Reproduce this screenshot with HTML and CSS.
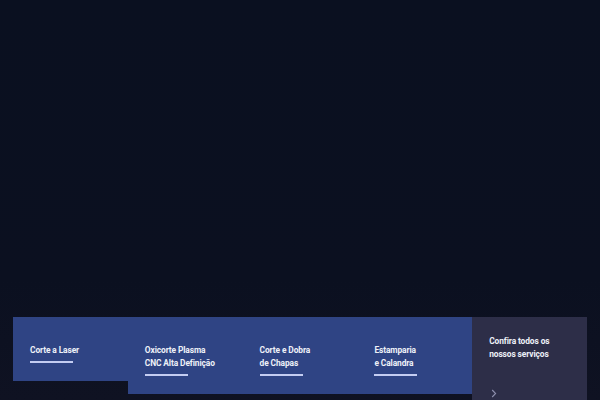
FILE: index.html
```html
<!DOCTYPE html>
<html lang="pt">
<head>
<meta charset="utf-8">
<link rel="stylesheet" href="styles.css">
</head>
<body>
<main class="hero"></main>
<section class="services">
  <a class="tile tile-short"><span class="label">Corte a Laser</span><span class="bar"></span></a>
  <a class="tile"><span class="label">Oxicorte Plasma<br>CNC Alta Definição</span><span class="bar"></span></a>
  <a class="tile"><span class="label">Corte e Dobra<br>de Chapas</span><span class="bar"></span></a>
  <a class="tile"><span class="label">Estamparia<br>e Calandra</span><span class="bar"></span></a>
  <a class="tile tile-all"><span class="label">Confira todos os<br>nossos serviços</span>
    <svg class="chev" width="6" height="9" viewBox="0 0 6 9"><path d="M1.2 1 L4.6 4.5 L1.2 8" fill="none" stroke="#8d8fae" stroke-width="1.1"/></svg>
  </a>
</section>
</body>
</html>
```
FILE: styles.css
```css
html, body {
  margin: 0;
  padding: 0;
  height: 400px;
  overflow: hidden;
}
body {
  background: linear-gradient(180deg, #0a1020 0%, #0b1020 70%, #0f1222 100%);
  font-family: Roboto, "Noto Sans", sans-serif;
  color: #eef1f8;
}
.hero {
  height: 317px;
}
.services {
  margin: 0 13px;
  display: grid;
  grid-template-columns: repeat(5, 1fr);
  align-items: start;
}
.tile {
  display: flex;
  flex-direction: column;
  align-items: flex-start;
  background: #2f4484;
  height: 77px;
  padding: 27px 0 0 17px;
  box-sizing: border-box;
  text-decoration: none;
  color: #eef1f8;
}
.tile-short {
  height: 64px;
}
.tile-all {
  background: #2d2e48;
  height: 90px;
  padding-top: 18px;
}
.label {
  font-size: 8.4px;
  font-weight: 700;
  line-height: 13px;
  letter-spacing: -0.1px;
}
.bar {
  display: block;
  width: 43px;
  height: 1.5px;
  background: #c4cdf2;
  margin-top: 4px;
}
.chev {
  margin-top: 28px;
  margin-left: 2px;
}
```
